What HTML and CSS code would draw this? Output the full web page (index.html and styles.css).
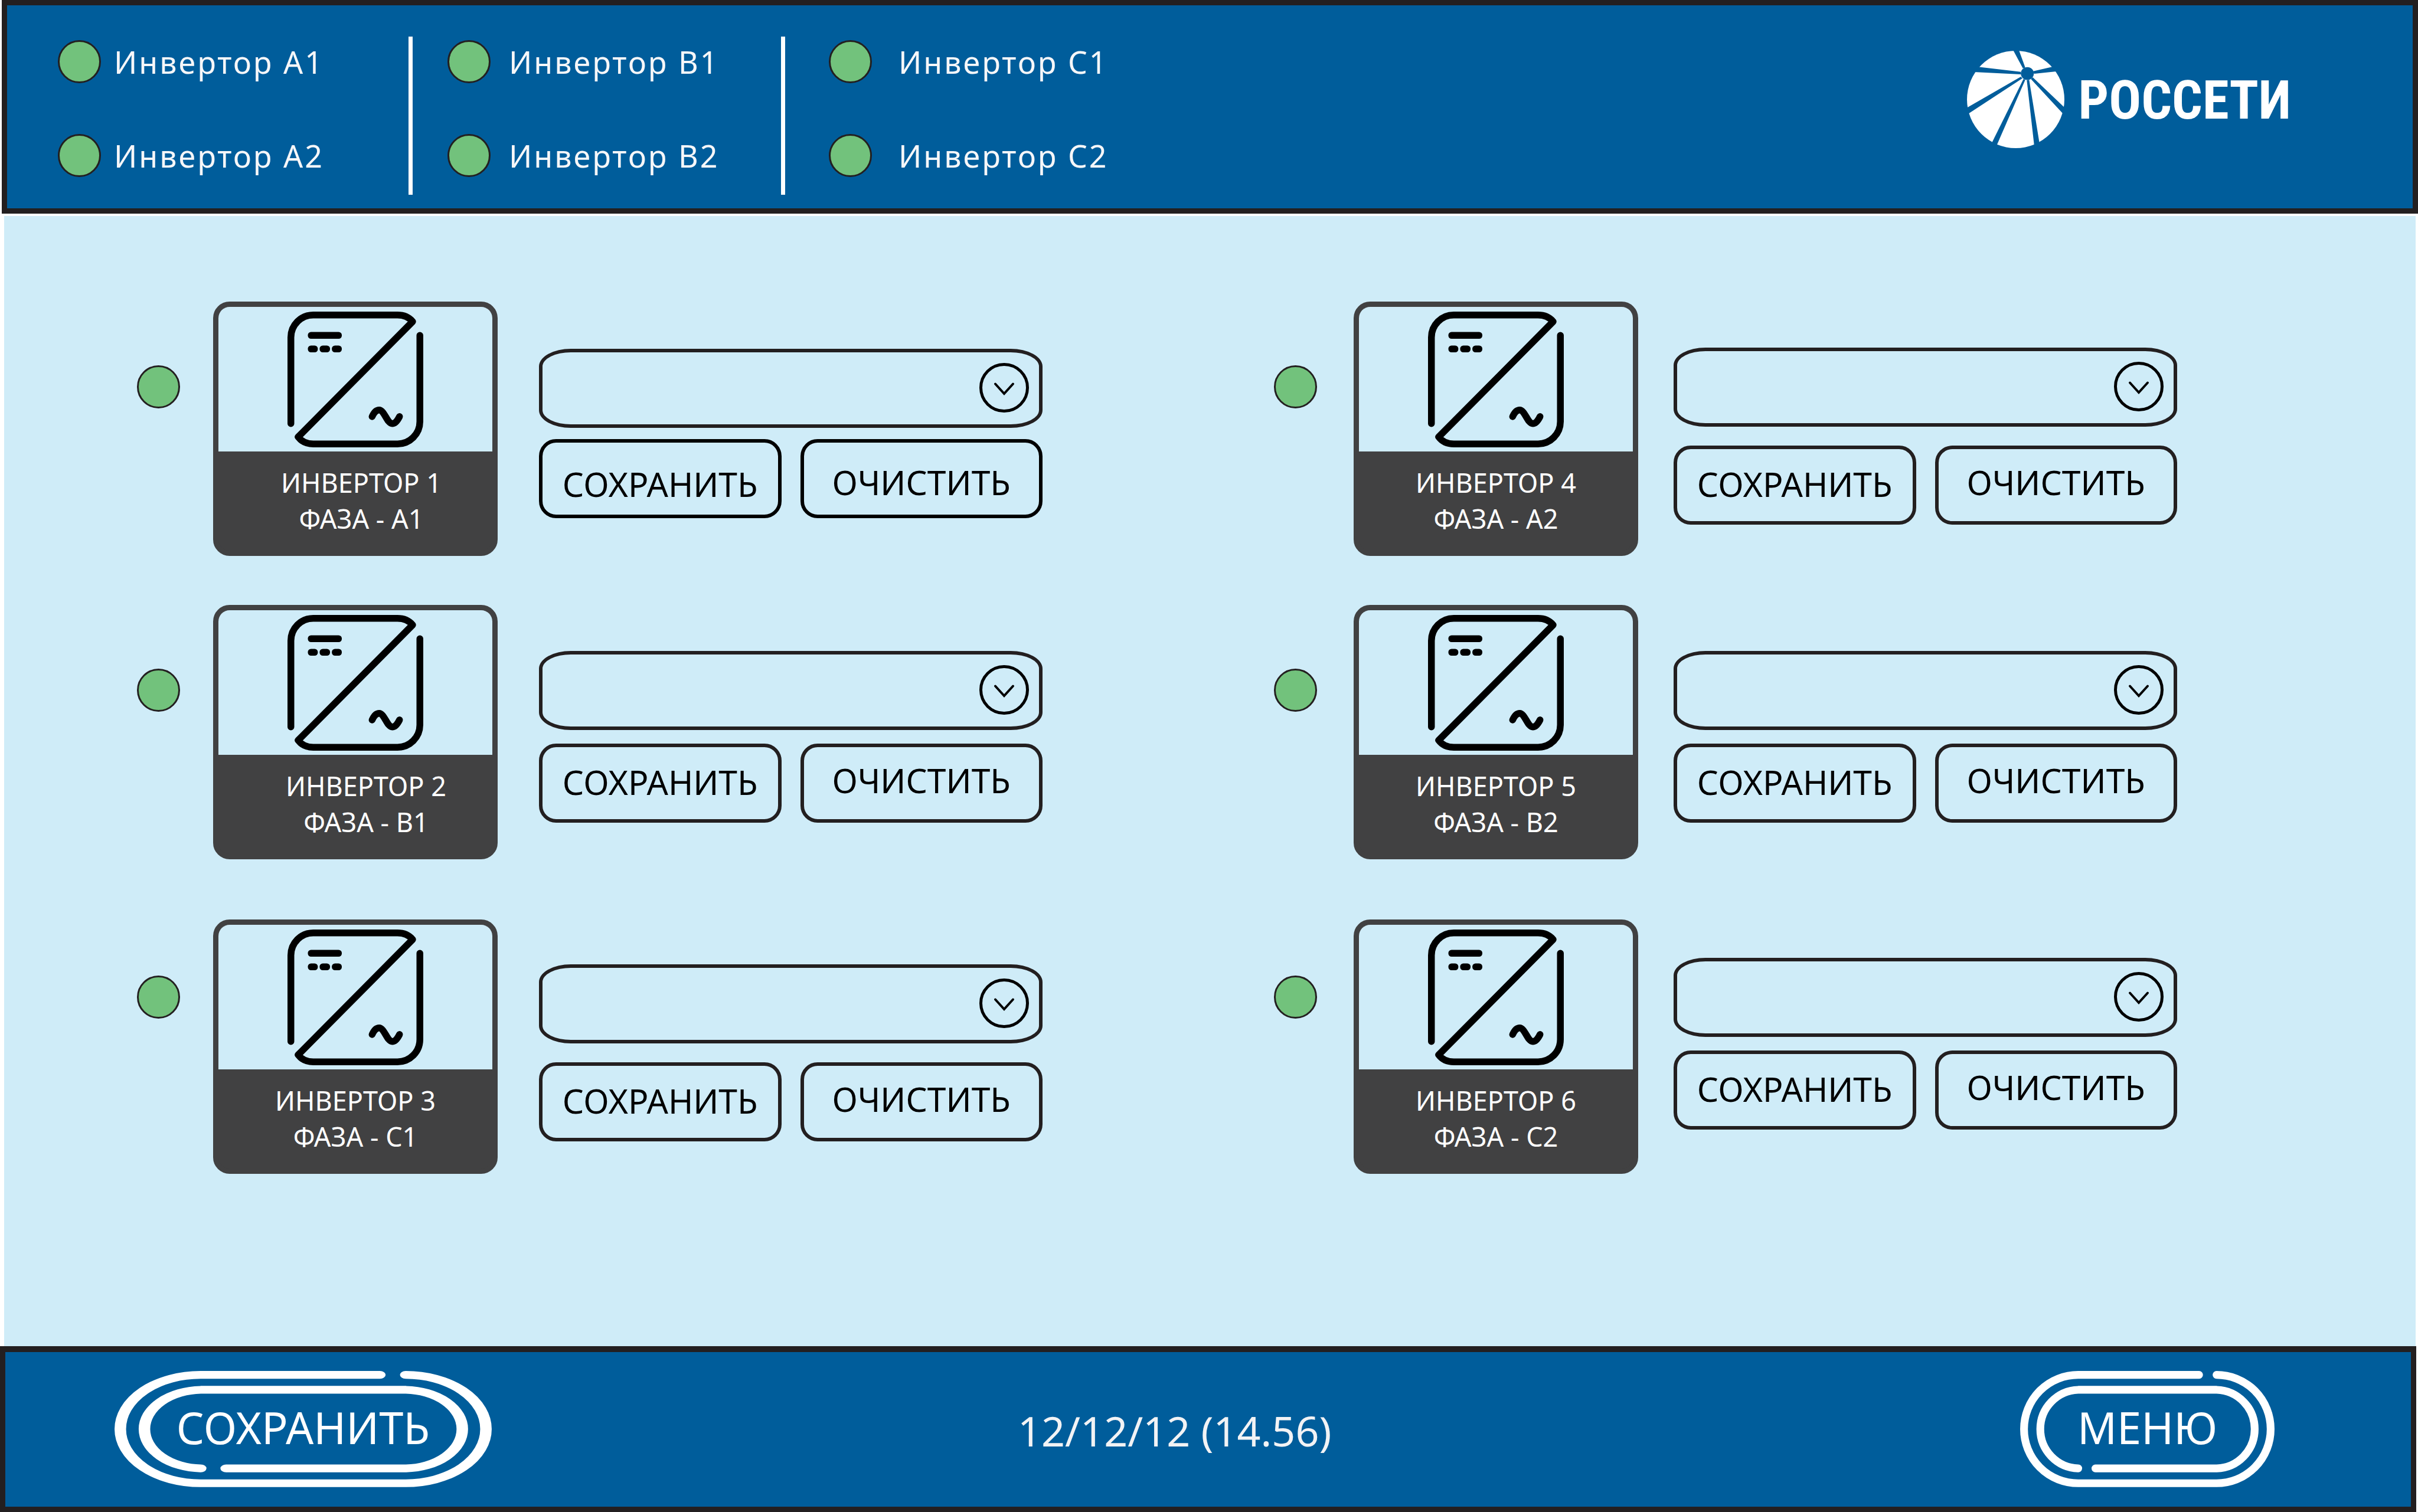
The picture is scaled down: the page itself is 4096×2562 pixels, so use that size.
FILE: index.html
```html
<!DOCTYPE html>
<html lang="ru">
<head>
<meta charset="utf-8">
<meta name="viewport" content="width=device-width, initial-scale=1">
<title>Россети — инверторы</title>
<link rel="stylesheet" href="styles.css">
</head>
<body>
<svg class="sprite" aria-hidden="true">
  <symbol id="inverter" viewBox="0 0 300 300">
    <g fill="none" stroke="#000" stroke-width="15" stroke-linecap="round" stroke-linejoin="round">
      <path d="M7.500 247.500V57A49.500 49.500 0 0 1 57 7.500H243C257 7.500 269 13 276.500 22L23.500 277C31 287 43 292.500 57 292.500H243A49.500 49.500 0 0 0 292.500 243V52.500"/>
      <path d="M187 232C192 221 197 217.500 202.500 217.500C214 217.500 220 247.500 231.500 247.500C237 247.500 242 243 247.500 232"/>
    </g>
    <rect x="45" y="45" width="75" height="15" rx="7"/>
    <rect x="45" y="75" width="22" height="15" rx="7"/>
    <rect x="71" y="75" width="23" height="15" rx="7"/>
    <rect x="98" y="75" width="22" height="15" rx="7"/>
  </symbol>
  <symbol id="chevron" viewBox="0 0 84 84">
    <circle cx="42" cy="42" r="39.500" fill="none" stroke="#000" stroke-width="5"/>
    <path d="M27 35.500L42 52L57 35.500" fill="none" stroke="#000" stroke-width="4" stroke-linecap="round"/>
  </symbol>
  <symbol id="frame" viewBox="0 0 563 257" preserveAspectRatio="none">
    <g fill="none" stroke="#fff" stroke-width="17.200" stroke-linecap="round">
      <path d="M396 8.600H128.400A119.800 119.800 0 0 0 128.400 248.200H434.600A119.800 119.800 0 0 0 434.600 8.600"/>
      <path d="M128.600 215.400A86.900 86.900 0 0 1 128.600 41.700H435.100A86.900 86.900 0 0 1 435.100 215.400H166.600"/>
    </g>
  </symbol>
</svg>

<header class="topbar">
  <div class="groups">
    <ul class="group group-a">
      <li><span class="lamp"></span>Инвертор A1</li>
      <li><span class="lamp"></span>Инвертор A2</li>
    </ul>
    <ul class="group group-b">
      <li><span class="lamp"></span>Инвертор B1</li>
      <li><span class="lamp"></span>Инвертор B2</li>
    </ul>
    <ul class="group group-c">
      <li><span class="lamp"></span>Инвертор C1</li>
      <li><span class="lamp"></span>Инвертор C2</li>
    </ul>
  </div>
  <div class="logo">
    <svg class="logo-mark" viewBox="0 0 215 215" aria-hidden="true">
      <circle cx="107.500" cy="107.500" r="107.500" fill="#fff"/>
      <g fill="#005d9b">
        <path d="M101 -3L114 -3L128.600 37L123.400 38.700Z"/>
        <path d="M18.400 34.900L8.300 46.500L119.400 52L118.800 46.700Z"/>
        <path d="M-10.700 131.800L-7.200 145.700L122.300 61L118.800 57.300Z"/>
        <path d="M48.800 215.600L60.400 220.900L128.600 64.300L124.600 62.700Z"/>
        <path d="M149.700 220.900L161.800 215.400L137.200 64.300L132 64.700Z"/>
        <path d="M221 130.900L217.700 145.200L141.200 62.700L145.200 58.700Z"/>
        <path d="M199.500 32.800L210 44.200L148.100 50.700L145.800 45.300Z"/>
        <circle cx="133.200" cy="50.300" r="14.300"/>
      </g>
    </svg>
    <span class="logo-text">РОССЕТИ</span>
  </div>
</header>

<main class="board">
  <article class="unit controls-near label-shift-s labels-low">
    <span class="lamp"></span>
    <div class="card"><div class="card-icon"><svg><use href="#inverter"/></svg></div><h2>ИНВЕРТОР 1<br>ФАЗА - A1</h2></div>
    <div class="controls">
      <div class="picker"><select aria-label="Инвертор 1"><option></option></select><svg><use href="#chevron"/></svg></div>
      <div class="buttons"><button type="button">СОХРАНИТЬ</button><button type="button" class="clear">ОЧИСТИТЬ</button></div>
    </div>
  </article>
  <article class="unit right controls-far">
    <span class="lamp"></span>
    <div class="card"><div class="card-icon"><svg><use href="#inverter"/></svg></div><h2>ИНВЕРТОР 4<br>ФАЗА - A2</h2></div>
    <div class="controls">
      <div class="picker"><select aria-label="Инвертор 4"><option></option></select><svg><use href="#chevron"/></svg></div>
      <div class="buttons"><button type="button">СОХРАНИТЬ</button><button type="button" class="clear">ОЧИСТИТЬ</button></div>
    </div>
  </article>
  <article class="unit label-shift-l">
    <span class="lamp"></span>
    <div class="card"><div class="card-icon"><svg><use href="#inverter"/></svg></div><h2>ИНВЕРТОР 2<br>ФАЗА - B1</h2></div>
    <div class="controls">
      <div class="picker"><select aria-label="Инвертор 2"><option></option></select><svg><use href="#chevron"/></svg></div>
      <div class="buttons"><button type="button">СОХРАНИТЬ</button><button type="button" class="clear">ОЧИСТИТЬ</button></div>
    </div>
  </article>
  <article class="unit right">
    <span class="lamp"></span>
    <div class="card"><div class="card-icon"><svg><use href="#inverter"/></svg></div><h2>ИНВЕРТОР 5<br>ФАЗА - B2</h2></div>
    <div class="controls">
      <div class="picker"><select aria-label="Инвертор 5"><option></option></select><svg><use href="#chevron"/></svg></div>
      <div class="buttons"><button type="button">СОХРАНИТЬ</button><button type="button" class="clear">ОЧИСТИТЬ</button></div>
    </div>
  </article>
  <article class="unit lamp-high controls-far controls-mid">
    <span class="lamp"></span>
    <div class="card"><div class="card-icon"><svg><use href="#inverter"/></svg></div><h2>ИНВЕРТОР 3<br>ФАЗА - C1</h2></div>
    <div class="controls">
      <div class="picker"><select aria-label="Инвертор 3"><option></option></select><svg><use href="#chevron"/></svg></div>
      <div class="buttons"><button type="button">СОХРАНИТЬ</button><button type="button" class="clear">ОЧИСТИТЬ</button></div>
    </div>
  </article>
  <article class="unit right lamp-high controls-high">
    <span class="lamp"></span>
    <div class="card"><div class="card-icon"><svg><use href="#inverter"/></svg></div><h2>ИНВЕРТОР 6<br>ФАЗА - C2</h2></div>
    <div class="controls">
      <div class="picker"><select aria-label="Инвертор 6"><option></option></select><svg><use href="#chevron"/></svg></div>
      <div class="buttons"><button type="button">СОХРАНИТЬ</button><button type="button" class="clear">ОЧИСТИТЬ</button></div>
    </div>
  </article>
</main>

<footer class="bottombar">
  <button type="button" class="pill pill-save"><svg viewBox="0 0 563 257" preserveAspectRatio="none" aria-hidden="true"><use href="#frame"/></svg><span>СОХРАНИТЬ</span></button>
  <time class="clock">12/12/12 (14.56)</time>
  <button type="button" class="pill pill-menu"><svg viewBox="0 0 563 257" preserveAspectRatio="none" aria-hidden="true"><use href="#frame"/></svg><span>МЕНЮ</span></button>
</footer>
</body>
</html>
```
FILE: styles.css
```css
:root {
  --blue: #005d9b;
  --sky: #cfecf8;
  --ink: #231f20;
  --card: #414142;
  --green: #72c27c;
}

* { box-sizing: border-box; }

body {
  margin: 0;
  min-height: 100vh;
  display: flex;
  flex-direction: column;
  background: #fff;
  font-family: "Noto Sans", "Open Sans", sans-serif;
}

button, select { font: inherit; background: none; cursor: pointer; }

.sprite { display: none; }

.lamp {
  flex: none;
  width: 73px;
  height: 73px;
  border: 3px solid var(--ink);
  border-radius: 50%;
  background: var(--green);
}

/* Top bar */
.topbar {
  display: flex;
  align-items: flex-start;
  justify-content: space-between;
  height: 362px;
  margin-left: 3px;
  padding: 53px 206px 0 86px;
  border: 9px solid var(--ink);
  background: var(--blue);
}

.groups { display: flex; }

.group {
  display: flex;
  flex-direction: column;
  gap: 86px;
  height: 268px;
  margin: 0;
  padding: 6px 0 0;
  list-style: none;
  color: #f7f7f9;
  font-size: 52px;
  line-height: 73px;
  letter-spacing: 3px;
}

.group li { display: flex; align-items: center; }
.group-a { width: 601px; border-right: 7px solid #fff; }
.group-b { width: 631px; padding-left: 59px; border-right: 7px solid #fff; }
.group-c { padding-left: 74px; }
.group-a li { gap: 22px; }
.group-b li { gap: 31px; }
.group-c li { gap: 45px; }

.logo { display: flex; align-items: center; gap: 24px; padding-top: 24px; }
.logo-mark { width: 165px; height: 165px; }

.logo-text {
  padding-top: 3px;
  color: #fff;
  font-family: "Liberation Sans Narrow", "Roboto Condensed", Roboto, sans-serif;
  font-size: 91px;
  font-weight: 700;
  line-height: 100px;
}

/* Inverter board */
.board {
  flex: 1;
  display: grid;
  grid-template-columns: 1fr 1fr;
  grid-template-rows: 514px 533px auto;
  align-items: start;
  margin: 4px 4px 0 7px;
  padding: 145px 8px 200px 225px;
  background: var(--sky);
}

.unit { display: flex; align-items: flex-start; }
.unit > .lamp { margin: 108px 56px 0 0; }
.unit.right > .lamp { margin-right: 62px; }
.unit.lamp-high > .lamp { margin-top: 95px; }

.card {
  width: 482px;
  height: 431px;
  margin-right: 70px;
  border: 9px solid var(--card);
  border-radius: 28px;
  background: var(--card);
}

.unit.right .card { margin-right: 60px; }

.card-icon {
  height: 245px;
  padding-top: 8px;
  border-radius: 19px 19px 0 0;
  background: var(--sky);
  text-align: center;
}

.card-icon svg { width: 230px; height: 230px; }

.card h2 {
  margin: 0;
  padding-top: 22px;
  color: #fff;
  font-size: 45px;
  font-weight: 400;
  line-height: 61px;
  text-align: center;
}

.label-shift-s h2 { padding-left: 20px; }
.label-shift-l h2 { padding-left: 36px; }

.controls {
  display: flex;
  flex-direction: column;
  gap: 23px;
  width: 853px;
  padding-top: 78px;
}

.controls-near .controls { gap: 19px; padding-top: 80px; }
.controls-far .controls { gap: 32px; }
.controls-mid .controls { padding-top: 76px; }
.controls-high .controls { padding-top: 65px; }

.picker { position: relative; height: 134px; }

.picker select {
  appearance: none;
  width: 100%;
  height: 100%;
  padding: 0 130px 0 32px;
  border: 6px solid var(--ink);
  border-radius: 54px / 30px;
  font-size: 57px;
}

.picker svg {
  position: absolute;
  top: 24px;
  right: 23px;
  width: 84px;
  height: 84px;
  pointer-events: none;
}

.buttons { display: grid; grid-template-columns: 1fr 1fr; gap: 32px; }

.buttons button {
  height: 134px;
  padding: 0 0 4px;
  border: 6px solid var(--ink);
  border-radius: 29px;
  color: #000;
  font-size: 57px;
  line-height: 76px;
}

.buttons .clear { padding-bottom: 10px; }
.labels-low .buttons button { padding-top: 22px; border-color: #000; }

/* Bottom bar */
.bottombar {
  display: flex;
  align-items: flex-start;
  height: 281px;
  margin-right: 3px;
  padding: 32px 231px 0 185px;
  border: 9px solid var(--ink);
  border-top-width: 10px;
  background: var(--blue);
}

.pill {
  display: grid;
  place-items: center;
  height: 197px;
  padding: 0;
  border: 0;
  color: #fff;
  font-size: 74px;
  line-height: 98px;
}

.pill svg { grid-area: 1 / 1; width: 100%; height: 197px; }
.pill span { grid-area: 1 / 1; padding-bottom: 5px; }
.pill-save { width: 639px; }
.pill-menu { width: 431px; margin-left: auto; }

.clock {
  margin-left: 891px;
  padding-top: 3px;
  color: #f2f3f5;
  font-size: 70px;
  line-height: 197px;
}
```
